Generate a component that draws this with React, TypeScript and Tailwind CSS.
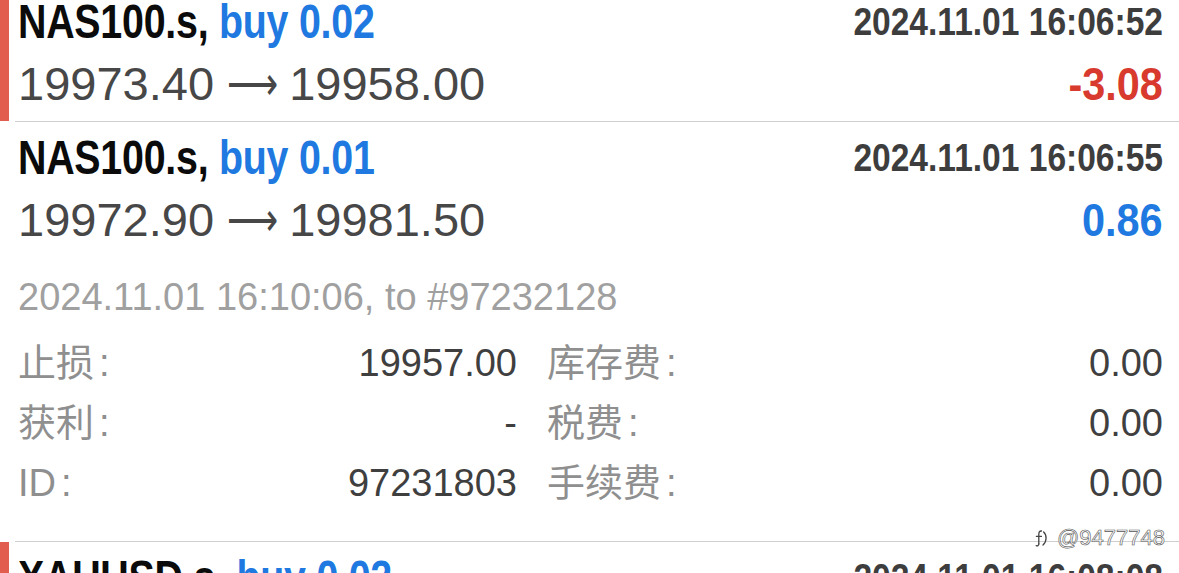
import React from "react";

const BOLD = "font-['Liberation_Sans',Arial,sans-serif] font-bold";

type RowProps = {
  bar?: boolean;
  symbol: string;
  side: string;
  date: string;
  from: string;
  to: string;
  profit: string;
  loss?: boolean;
  children?: React.ReactNode;
};

function Row({ bar, symbol, side, date, from, to, profit, loss, children }: RowProps) {
  return (
    <div className="flex">
      <div className={bar ? "w-[9px] shrink-0 bg-[#e35d4f]" : "w-[9px] shrink-0"} />
      <div className="flex-1 pl-[9px] pr-[16px] pt-[12px] pb-[14px]">
        <div className="flex justify-between items-start">
          <div
            className={`${BOLD} text-[48px] leading-none text-[#0b0b0b] whitespace-nowrap scale-x-[0.82] origin-left tracking-[-0.3px]`}
          >
            {symbol} <span className="text-[#2079e0]">{side}</span>
          </div>
          <div
            className={`${BOLD} text-[39px] leading-none text-[#3d3d3d] mt-[4px] whitespace-nowrap scale-x-[0.86] origin-right`}
          >
            {date}
          </div>
        </div>
        <div className="flex justify-between items-baseline mt-[14px]">
          <div className="text-[47px] leading-none text-[#474747] whitespace-nowrap">
            {from}{" "}
            <span className="inline-block leading-none font-['DejaVu_Sans',sans-serif] font-extralight scale-x-[0.76] origin-left mr-[-18px]">
              ⟶
            </span>{" "}
            {to}
          </div>
          <div
            className={
              loss
                ? `${BOLD} text-[46px] leading-none text-[#d83a2e] scale-x-[0.9] origin-right`
                : `${BOLD} text-[46px] leading-none text-[#2079e0] scale-x-[0.9] origin-right`
            }
          >
            {profit}
          </div>
        </div>
        {children}
      </div>
    </div>
  );
}

function Divider() {
  return <div className="ml-[15px] h-px bg-[#cfcfcf]" />;
}

function Detail({ label, value }: { label: string; value: string }) {
  return (
    <div className="flex justify-between items-center h-[60px] leading-[60px] text-[38px] whitespace-nowrap">
      <span className="text-[#8f8f8f] font-['Liberation_Sans','Noto_Sans_CJK_SC',sans-serif]">
        {label}
        <span className="ml-[5px]">:</span>
      </span>
      <span className="text-[#3f3f3f]">{value}</span>
    </div>
  );
}

export default function App() {
  return (
    <div className="relative w-[1179px] h-[573px] overflow-hidden bg-white font-['Liberation_Sans','Noto_Sans_CJK_SC',sans-serif]">
      <div className="-mt-[14px]">
        <Row
          bar
          symbol="NAS100.s,"
          side="buy 0.02"
          date="2024.11.01 16:06:52"
          from="19973.40"
          to="19958.00"
          profit="-3.08"
          loss
        />
        <Divider />
        <Row
          symbol="NAS100.s,"
          side="buy 0.01"
          date="2024.11.01 16:06:55"
          from="19972.90"
          to="19981.50"
          profit="0.86"
        >
          <div className="mt-[35px] text-[38px] leading-none text-[#a0a0a0] whitespace-nowrap">
            2024.11.01 16:10:06, to #97232128
          </div>
          <div className="mt-[17px] mb-[14px] grid grid-cols-[499px_1fr] gap-x-[30px]">
            <Detail label="止损" value="19957.00" />
            <Detail label="库存费" value="0.00" />
            <Detail label="获利" value="-" />
            <Detail label="税费" value="0.00" />
            <Detail label="ID" value="97231803" />
            <Detail label="手续费" value="0.00" />
          </div>
        </Row>
        <Divider />
        <Row
          bar
          symbol="XAUUSD.s,"
          side="buy 0.02"
          date="2024.11.01 16:08:08"
          from="2739.50"
          to="2741.20"
          profit="3.40"
        />
      </div>

      <div className="absolute right-[14px] top-[527px] flex items-center gap-[9px]">
        <svg width="13" height="19" viewBox="0 0 13 19" fill="none" stroke="#444" strokeWidth="1.3" strokeLinecap="round">
          <path d="M6.5 2 C4.4 1.8 3.8 3.4 3.8 5.4 L3.8 15" />
          <path d="M1.4 7.4 L6.4 7.4" />
          <path d="M8.6 3 C12 6 12 12.4 8 16" />
          <path d="M3.8 15 C3.6 16.6 2.6 17.2 1.2 16.6" />
        </svg>
        <span className="text-[22px] leading-none text-white [-webkit-text-stroke:0.6px_#555] font-['Liberation_Sans',sans-serif]">
          @9477748
        </span>
      </div>
    </div>
  );
}
